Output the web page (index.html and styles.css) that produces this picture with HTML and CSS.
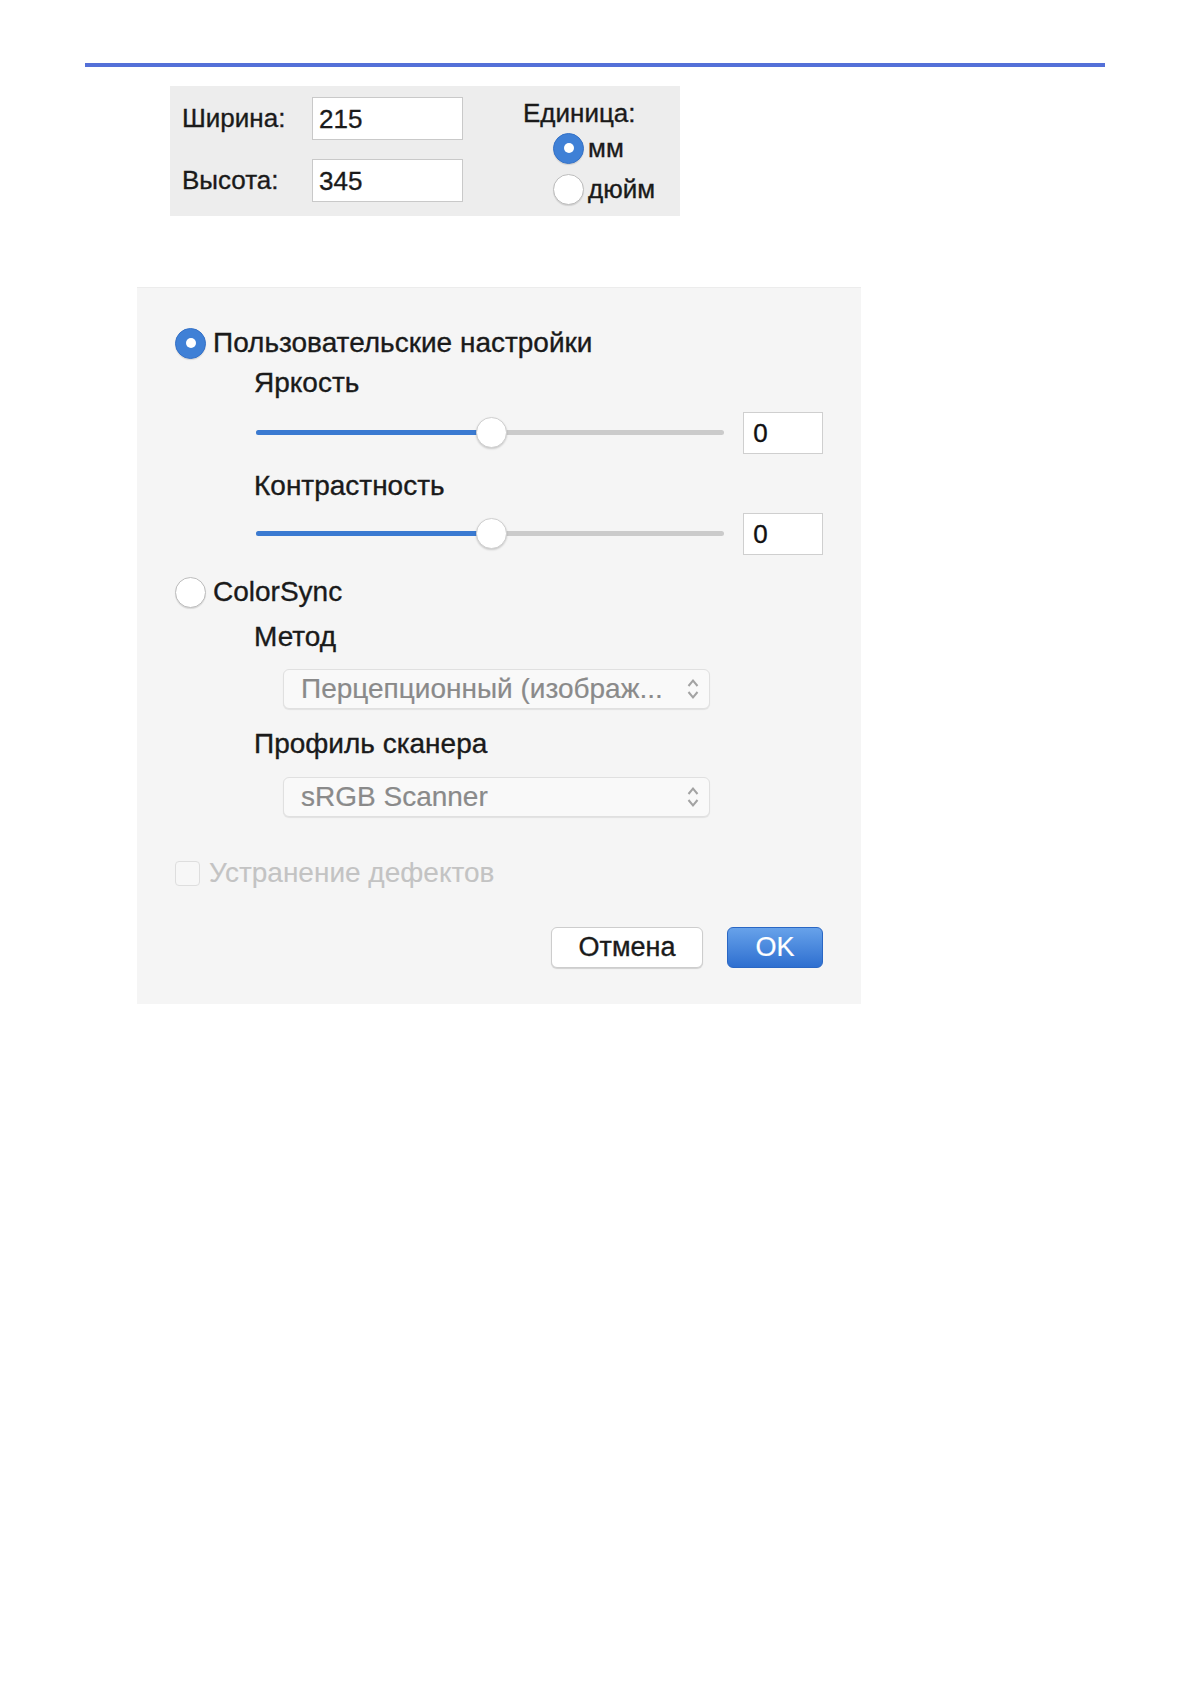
FILE: index.html
```html
<!DOCTYPE html>
<html lang="ru">
<head>
<meta charset="utf-8">
<link rel="stylesheet" href="styles.css">
</head>
<body>
<div class="rule"></div>

<div class="size-panel">
  <div class="fields">
    <div class="field-row">
      <span class="flabel">Ширина:</span>
      <div class="tbox">215</div>
    </div>
    <div class="field-row">
      <span class="flabel">Высота:</span>
      <div class="tbox">345</div>
    </div>
  </div>
  <div class="units">
    <div class="units-title">Единица:</div>
    <div class="unit-opt"><span class="radio on small"></span><span>мм</span></div>
    <div class="unit-opt"><span class="radio small"></span><span>дюйм</span></div>
  </div>
</div>

<div class="dialog">
  <div class="opt-row r1"><span class="radio on"></span><span>Пользовательские настройки</span></div>
  <div class="sub-label l-bright">Яркость</div>
  <div class="slider-row s1">
    <div class="slider">
      <div class="track"><div class="fill"></div></div>
      <div class="knob"></div>
    </div>
    <div class="num">0</div>
  </div>
  <div class="sub-label l-contrast">Контрастность</div>
  <div class="slider-row s2">
    <div class="slider">
      <div class="track"><div class="fill"></div></div>
      <div class="knob"></div>
    </div>
    <div class="num">0</div>
  </div>
  <div class="opt-row r2"><span class="radio"></span><span>ColorSync</span></div>
  <div class="sub-label l-method">Метод</div>
  <div class="popup p1">
    <span>Перцепционный (изображ...</span>
    <svg class="arrows" width="16" height="28" viewBox="0 0 16 28"><path d="M3.5 11 L8 5.5 L12.5 11" fill="none" stroke="#a3a3a3" stroke-width="2"/><path d="M3.5 17 L8 22.5 L12.5 17" fill="none" stroke="#a3a3a3" stroke-width="2"/></svg>
  </div>
  <div class="sub-label l-profile">Профиль сканера</div>
  <div class="popup p2">
    <span>sRGB Scanner</span>
    <svg class="arrows" width="16" height="28" viewBox="0 0 16 28"><path d="M3.5 11 L8 5.5 L12.5 11" fill="none" stroke="#a3a3a3" stroke-width="2"/><path d="M3.5 17 L8 22.5 L12.5 17" fill="none" stroke="#a3a3a3" stroke-width="2"/></svg>
  </div>
  <div class="check-row"><span class="check"></span><span>Устранение дефектов</span></div>
  <div class="buttons">
    <div class="btn cancel">Отмена</div>
    <div class="btn ok">OK</div>
  </div>
</div>
</body>
</html>
```
FILE: styles.css
```css
html, body {
  margin: 0;
  padding: 0;
  background: #ffffff;
}
body {
  font-family: "Liberation Sans", Arial, sans-serif;
  color: #1a1a1a;
  padding-top: 63px;
  -webkit-text-stroke: 0.35px currentColor;
}
.rule {
  margin-left: 85px;
  width: 1020px;
  height: 4px;
  background: #5470d8;
}

/* top size panel */
.size-panel {
  margin-top: 19px;
  margin-left: 170px;
  width: 510px;
  height: 130px;
  box-sizing: border-box;
  background: #ededed;
  display: flex;
  padding: 11px 0 0 12px;
  font-size: 26px;
}
.fields {
  display: flex;
  flex-direction: column;
  gap: 19px;
}
.field-row {
  display: flex;
  align-items: center;
}
.flabel {
  width: 130px;
}
.tbox {
  width: 151px;
  height: 43px;
  box-sizing: border-box;
  background: #fff;
  border: 1px solid #c9c9c9;
  padding-left: 6px;
  line-height: 43px;
  font-size: 26px;
}
.units {
  margin-left: 60px;
  display: flex;
  flex-direction: column;
  align-items: flex-start;
}
.units-title {
  height: 30px;
  line-height: 30px;
  margin-top: 1px;
}
.unit-opt {
  margin-left: 30px;
  display: flex;
  align-items: center;
  gap: 4px;
  height: 38px;
  margin-top: 1px;
}
.unit-opt + .unit-opt {
  margin-top: 3px;
}

/* radios */
.radio {
  display: inline-block;
  width: 31px;
  height: 31px;
  box-sizing: border-box;
  border-radius: 50%;
  background: #fff;
  border: 1px solid #bdbdbd;
  box-shadow: 0 1px 1px rgba(0,0,0,0.12);
  position: relative;
  flex: none;
}
.radio.on {
  background: #3f80d6;
  border-color: #3572c8;
}
.radio.on::after {
  content: "";
  position: absolute;
  left: 50%;
  top: 50%;
  width: 10px;
  height: 10px;
  margin: -5px 0 0 -5px;
  border-radius: 50%;
  background: #fff;
}

/* dialog */
.dialog {
  margin-top: 71px;
  margin-left: 137px;
  width: 724px;
  height: 717px;
  box-sizing: border-box;
  background: #f5f5f5;
  border-top: 1px solid #ececec;
  padding: 39px 38px 0 38px;
  display: flex;
  flex-direction: column;
  font-size: 28px;
}
.opt-row {
  display: flex;
  align-items: center;
  gap: 7px;
  height: 32px;
}
.sub-label {
  margin-left: 79px;
  height: 32px;
  line-height: 32px;
}
.l-bright { margin-top: 8px; }
.l-contrast { margin-top: 17px; }
.l-method { margin-top: 13px; }
.l-profile { margin-top: 19px; }
.r2 { margin-top: 22px; }

.slider-row {
  display: flex;
  align-items: center;
  margin-left: 81px;
  height: 41px;
}
.s1 { margin-top: 13px; }
.s2 { margin-top: 11px; }
.slider {
  position: relative;
  width: 470px;
  height: 32px;
  display: flex;
  align-items: center;
}
.track {
  width: 100%;
  height: 5px;
  border-radius: 3px;
  background: #cbcbcb;
  overflow: hidden;
}
.fill {
  width: 235px;
  height: 100%;
  background: #3a7ad1;
}
.knob {
  position: absolute;
  left: 220px;
  top: 0;
  width: 31px;
  height: 31px;
  box-sizing: border-box;
  border-radius: 50%;
  background: #fff;
  border: 1px solid #d0d0d0;
  box-shadow: 0 1px 2px rgba(0,0,0,0.18);
}
.num {
  margin-left: 19px;
  width: 80px;
  height: 42px;
  box-sizing: border-box;
  background: #fff;
  border: 1px solid #cfcfcf;
  padding-left: 9px;
  line-height: 41px;
  font-size: 26px;
  color: #111;
}

.popup {
  margin-left: 108px;
  width: 427px;
  height: 40px;
  box-sizing: border-box;
  background: #f9f9f9;
  border: 1px solid #e0e0e0;
  border-radius: 6px;
  box-shadow: 0 1px 1px rgba(0,0,0,0.08);
  display: flex;
  align-items: center;
  justify-content: space-between;
  padding: 0 8px 0 17px;
  color: #8a8a8a;
  font-size: 28px;
  -webkit-text-stroke: 0.2px currentColor;
}
.p1 { margin-top: 16px; }
.p2 { margin-top: 17px; }
.arrows { flex: none; }

.check-row {
  margin-top: 40px;
  display: flex;
  align-items: center;
  gap: 9px;
  height: 32px;
  color: #c3c3c3;
  font-size: 28px;
  -webkit-text-stroke: 0.1px currentColor;
}
.check {
  width: 25px;
  height: 25px;
  box-sizing: border-box;
  border: 1px solid #dedede;
  border-radius: 4px;
  background: #f7f7f7;
}

.buttons {
  margin-top: 38px;
  display: flex;
  justify-content: flex-end;
  gap: 24px;
}
.btn {
  height: 41px;
  box-sizing: border-box;
  border-radius: 6px;
  display: flex;
  align-items: center;
  justify-content: center;
  font-size: 27px;
}
.cancel {
  width: 152px;
  background: #fff;
  border: 1px solid #cdcdcd;
  box-shadow: 0 1px 1px rgba(0,0,0,0.15);
  color: #1a1a1a;
}
.ok {
  width: 96px;
  background: linear-gradient(#67a2ea, #2e6fd0);
  border: 1px solid #2a67c4;
  color: #fff;
  -webkit-text-stroke: 0.2px currentColor;
}
```
